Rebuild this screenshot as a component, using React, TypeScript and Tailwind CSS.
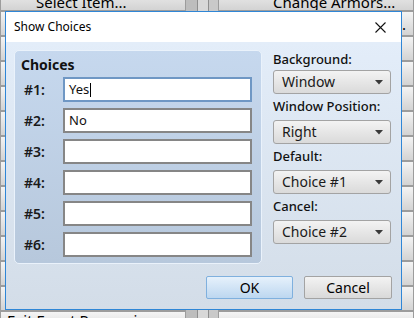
import React from "react";

const bgBtn =
  "h-[25px] shrink-0 border border-[#9c9c9c] bg-linear-to-b from-[#f4f4f4] to-[#d3d3d3] flex items-center text-[15px] text-black whitespace-nowrap overflow-hidden";

function Dropdown({ value }: { value: string }) {
  return (
    <div className="h-[24px] w-[118px] rounded-[3px] border border-[#a3a3a3] bg-linear-to-b from-[#f3f3f3] to-[#dadada] flex items-center justify-between pl-[8px] pr-[7px]">
      <span className="text-[14px] text-[#1a1a1a] leading-none">{value}</span>
      <svg width="8" height="5" viewBox="0 0 8 5">
        <polygon points="0,0 8,0 4,4.5" fill="#3a3a3a" />
      </svg>
    </div>
  );
}

function ChoiceRow({ n, value, focused }: { n: number; value: string; focused?: boolean }) {
  return (
    <div className="flex items-center h-[25px]">
      <span className="w-[39px] text-[14px] font-semibold text-[#1a1a1a] leading-none">#{n}:</span>
      <div
        className={
          "h-[25px] w-[189px] bg-white border-2 flex items-center pl-[4px] " +
          (focused ? "border-[#6f97c4]" : "border-[#868686]")
        }
      >
        <span className="text-[13px] text-[#111] leading-none">{value}</span>
        {focused && <span className="w-px h-[14px] bg-black ml-[1px]" />}
      </div>
    </div>
  );
}

export default function App() {
  const leftRows = ["", "", "", "", "", "", "", "", "", "", "", ""];
  return (
    <div className="relative w-[414px] h-[318px] overflow-hidden bg-[#c6c6c6] font-['Noto_Sans',sans-serif]">
      {/* background window */}
      <div className="flex w-full h-full">
        <div className="w-[186px] flex flex-col mt-[-15px] shrink-0">
          <div className={bgBtn + " h-[26px] items-end pl-[35px] leading-[15px] pb-[0px]"}>Select Item...</div>
          {leftRows.map((_, i) => (
            <div key={i} className={bgBtn} />
          ))}
          <div className={bgBtn + " items-start pl-[6px] pt-[1px] leading-[15px]"}>Exit Event Processing</div>
        </div>
        <div className="flex shrink-0">
          <div className="w-[11px] bg-[#bdbdbd]" />
          <div className="w-px bg-[#8e8e8e]" />
          <div className="w-[10px] bg-[#d8d8d8]" />
          <div className="w-px bg-[#8e8e8e]" />
          <div className="w-[9px] bg-[#c9c9c9]" />
        </div>
        <div className="flex-1 flex flex-col mt-[-15px]">
          <div className={bgBtn + " h-[26px] items-end pl-[54px] leading-[15px]"}>Change Armors...</div>
          <div className={bgBtn + " justify-end pr-[7px] items-end pb-[3px] leading-[15px]"}>Change Equipment...</div>
          {leftRows.map((_, i) => (
            <div key={i} className={bgBtn} />
          ))}
        </div>
      </div>

      {/* dialog */}
      <div className="absolute left-[5px] top-[11px] w-[397px] h-[299px] border border-[#2f86d6] flex flex-col">
        <div className="h-[30px] bg-white flex items-center justify-between pl-[8px] pr-[15px] shrink-0">
          <span className="text-[12px] text-black">Show Choices</span>
          <svg width="11" height="11" viewBox="0 0 11 11">
            <path d="M0.5 0.5 L10.5 10.5 M10.5 0.5 L0.5 10.5" stroke="#111" strokeWidth="1.1" />
          </svg>
        </div>
        <div className="flex-1 bg-linear-to-b from-[#e3edf9] to-[#d3dde8] flex flex-col pt-[8px]">
          <div className="flex">
            <div className="ml-[8px] w-[248px] h-[214px] rounded-[5px] border border-[#eaf2fb] bg-linear-to-b from-[#c6d8ee] to-[#b7c8dc] flex flex-col pl-[9px]">
              <div className="h-[26px] flex items-center">
                <span className="text-[14px] font-bold text-[#111] ml-[-3px] mt-[1px]">Choices</span>
              </div>
              <div className="flex flex-col gap-[6px]">
                <ChoiceRow n={1} value="Yes" focused />
                <ChoiceRow n={2} value="No" />
                <ChoiceRow n={3} value="" />
                <ChoiceRow n={4} value="" />
                <ChoiceRow n={5} value="" />
                <ChoiceRow n={6} value="" />
              </div>
            </div>
            <div className="ml-[11px] flex flex-col">
              <div className="h-[20px] flex items-center text-[13px] font-medium text-[#111]">Background:</div>
              <Dropdown value="Window" />
              <div className="h-[26px] flex items-center text-[13px] font-medium text-[#111]">Window Position:</div>
              <Dropdown value="Right" />
              <div className="h-[26px] flex items-center text-[13px] font-medium text-[#111]">Default:</div>
              <Dropdown value="Choice #1" />
              <div className="h-[26px] flex items-center text-[13px] font-medium text-[#111]">Cancel:</div>
              <Dropdown value="Choice #2" />
            </div>
          </div>
          <div className="flex justify-end gap-[11px] pr-[9px] mt-[12px]">
            <div className="w-[87px] h-[23px] rounded-[2px] border border-[#7fb0de] bg-linear-to-b from-[#e6f1fb] to-[#bdd7f0] flex items-center justify-center text-[14px] text-black">
              OK
            </div>
            <div className="w-[88px] h-[23px] rounded-[2px] border border-[#a3a3a3] bg-linear-to-b from-[#f3f3f3] to-[#d9d9d9] flex items-center justify-center text-[14px] text-black">
              Cancel
            </div>
          </div>
        </div>
      </div>
    </div>
  );
}
